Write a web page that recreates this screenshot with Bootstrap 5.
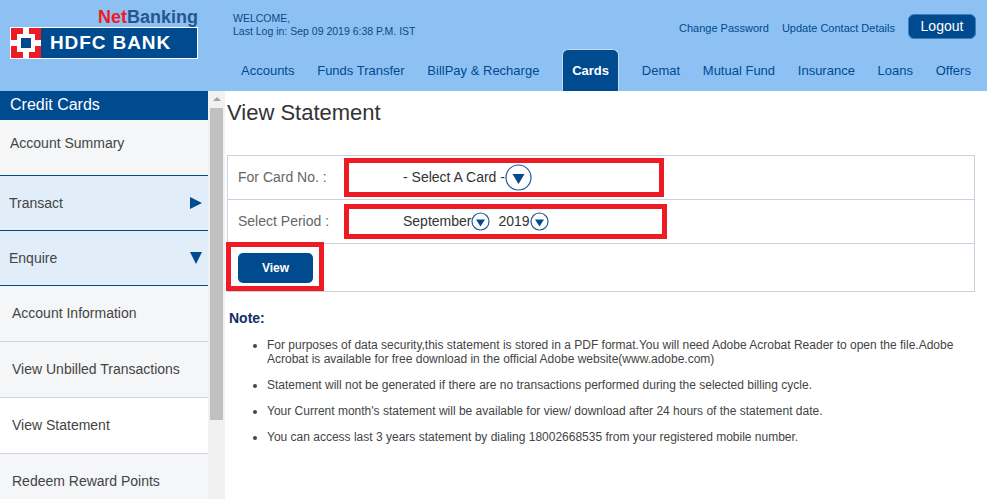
<!DOCTYPE html>
<html lang="en">
<head>
    <meta charset="UTF-8">
    <meta name="viewport" content="width=device-width, initial-scale=1.0">
    <title>HDFC NetBanking</title>
    <link href="https://cdn.jsdelivr.net/npm/bootstrap@5.3.3/dist/css/bootstrap.min.css" rel="stylesheet">
    <style>
        html, body { height: 100%; }
        body {
            font-family: "Liberation Sans", Arial, sans-serif;
            font-size: 12px;
            color: #333;
            overflow: hidden;
            background: #fff;
        }
        .top-bar { height: 91px; background: #8dc1f4; color: #004a8f; }
        .brand-box { width: 188px; margin-left: 10px; padding-top: 7px; }
        .net-word { font-size: 18px; font-weight: 700; line-height: 20px; text-align: right; color: #23578f; }
        .net-word span { color: #ed1c24; }
        .logo-strip { height: 32px; background: #004a8f; border: 1px solid #fff; }
        .logo-mark { width: 30px; height: 30px; display: block; flex: none; }
        .logo-word { font-size: 19px; font-weight: 700; color: #fff; letter-spacing: .9px; margin-left: 9px; line-height: 30px; white-space: nowrap; }
        .head-right { margin-left: 35px; width: 754px; }
        .welcome-row { height: 49px; }
        .welcome-text { font-size: 10.5px; line-height: 13px; padding-top: 12px; color: #0b4a85; }
        .top-link { font-size: 11px; color: #004a8f; text-decoration: none; margin-top: 20px; margin-right: 13px; }
        .logout-btn { width: 68px; height: 25px; margin-top: 14px; margin-left: 0; margin-right: 11px; padding: 0; background: #004a8f; color: #fff; font-size: 14px; font-weight: 400; border: 1px solid #3f7cb8; border-radius: 6px; }
        .menu-row { height: 42px; }
        .menu-item { font-size: 13px; color: #004a8f; text-decoration: none; line-height: 44px; white-space: nowrap; }
        .menu-item.on { width: 57px; text-align: center; background: #004a8f; color: #fff; font-weight: 700; border: 1px solid #c5d9ee; border-bottom: 0; border-radius: 6px 6px 0 0; line-height: 42px; }
        .page-body { height: 408px; }
        .side-panel { width: 208px; flex: none; overflow: hidden; background: #f5f6f8; }
        .side-title { height: 29px; background: #004a8f; color: #fff; font-size: 16px; line-height: 27px; padding-left: 10px; }
        .side-item { height: 56px; display: flex; align-items: center; padding-left: 12px; font-size: 14px; color: #444; border-bottom: 1px solid #d0d3df; text-decoration: none; }
        .side-item.first { height: 56px; padding-left: 10px; padding-bottom: 8px; border-bottom-color: #004a8f; }
        .side-item.group { height: 55px; padding: 0 6px 0 9px; justify-content: space-between; background: #e1edf9; border-bottom-color: #004a8f; }
        .side-item.current { background: #fff; }
        .scroll-track { width: 17px; flex: none; background: #f1f1f1; position: relative; }
        .scroll-up { width: 0; height: 0; margin: 6px auto 0; border-left: 4px solid transparent; border-right: 4px solid transparent; border-bottom: 4px solid #a3a3a3; }
        .scroll-thumb { width: 13px; height: 312px; margin: 7px 0 0 2px; background: #c1c1c1; }
        .main-area { flex: 1; padding: 0 12px 0 2px; min-width: 0; }
        .page-title { font-size: 22px; font-weight: 400; color: #333; line-height: 26px; margin: 9px 0 29px; }
        .form-box { border: 1px solid #ccd0de; border-bottom: 0; }
        .form-line { border-bottom: 1px solid #ccd0de; height: 44px; position: relative; display: flex; align-items: center; padding-left: 10px; font-size: 14px; }
        .form-line.btn-line { height: 48px; }
        .field-label { width: 165px; flex: none; color: #666; font-size: 14px; }
        .field-value { color: #333; font-size: 14px; display: flex; align-items: center; }
        .red-mark { position: absolute; border: 5px solid #ed1c24; pointer-events: none; }
        .mark-card { left: 116px; top: 2px; width: 320px; height: 39px; }
        .mark-period { left: 116px; top: 4px; width: 323px; height: 35px; }
        .mark-view { left: -2px; top: -2px; width: 98px; height: 49px; }
        .view-btn { width: 75px; height: 30px; padding: 0; background: #004a8f; color: #fff; font-size: 12px; font-weight: 700; border: 0; border-radius: 5px; }
        .note-head { font-size: 14px; font-weight: 700; color: #0f2f66; margin: 18px 0 11px 2px; line-height: 17px; }
        .note-list { margin: 0; padding-left: 40px; font-size: 12px; line-height: 14px; color: #444; }
        .note-list li { margin-bottom: 12px; }
    </style>
</head>

<body>
    <div class="top-bar d-flex">
        <div class="brand-box">
            <div class="net-word"><span>Net</span>Banking</div>
            <div class="logo-strip d-flex align-items-center">
                <svg class="logo-mark" viewBox="0 0 30 30">
                    <rect width="30" height="30" fill="#ed1c24"/>
                    <path d="M12 0h6v8h-6zM12 22h6v8h-6zM0 12h8v6H0zM22 12h8v6h-8z" fill="#fff"/>
                    <rect x="6" y="6" width="18" height="18" fill="#fff"/>
                    <rect x="10" y="10" width="10" height="10" fill="#004a8f"/>
                </svg>
                <span class="logo-word">HDFC BANK</span>
            </div>
        </div>
        <div class="head-right">
            <div class="welcome-row d-flex justify-content-between">
                <div class="welcome-text"><b class="fw-normal">WELCOME,</b><br>Last Log in: Sep 09 2019 6:38 P.M. IST</div>
                <div class="d-flex align-items-start">
                    <a class="top-link" href="#">Change Password</a>
                    <a class="top-link" href="#">Update Contact Details</a>
                    <button class="btn logout-btn">Logout</button>
                </div>
            </div>
            <nav class="menu-row d-flex justify-content-between pe-3 ps-2">
                <a class="menu-item" href="#">Accounts</a>
                <a class="menu-item" href="#">Funds Transfer</a>
                <a class="menu-item" href="#">BillPay &amp; Recharge</a>
                <a class="menu-item on" href="#">Cards</a>
                <a class="menu-item" href="#">Demat</a>
                <a class="menu-item" href="#">Mutual Fund</a>
                <a class="menu-item" href="#">Insurance</a>
                <a class="menu-item" href="#">Loans</a>
                <a class="menu-item" href="#">Offers</a>
            </nav>
        </div>
    </div>

    <div class="page-body d-flex">
        <div class="side-panel">
            <div class="side-title">Credit Cards</div>
            <a class="side-item first" href="#">Account Summary</a>
            <a class="side-item group" href="#">Transact
                <svg width="12" height="12" viewBox="0 0 12 12"><path d="M0 0L12 6L0 12Z" fill="#004a8f"/></svg>
            </a>
            <a class="side-item group" href="#">Enquire
                <svg width="12" height="12" viewBox="0 0 12 12"><path d="M0 0H12L6 12Z" fill="#004a8f"/></svg>
            </a>
            <a class="side-item" href="#">Account Information</a>
            <a class="side-item" href="#">View Unbilled Transactions</a>
            <a class="side-item current" href="#">View Statement</a>
            <a class="side-item" href="#">Redeem Reward Points</a>
        </div>
        <div class="scroll-track">
            <div class="scroll-up"></div>
            <div class="scroll-thumb"></div>
        </div>
        <div class="main-area">
            <h1 class="page-title">View Statement</h1>
            <div class="form-box">
                <div class="form-line">
                    <div class="field-label">For Card No. :</div>
                    <div class="field-value">- Select A Card -
                        <svg class="ms-auto" style="margin-left:122px" width="27" height="27" viewBox="0 0 27 27"><circle cx="13.5" cy="13.5" r="12.5" fill="#fff" stroke="#1d5c9d" stroke-width="1.2"/><path d="M7.5 10h12l-6 10z" fill="#004a8f"/></svg>
                    </div>
                    <div class="red-mark mark-card"></div>
                </div>
                <div class="form-line">
                    <div class="field-label">Select Period :</div>
                    <div class="field-value">September
                        <svg class="ms-0" width="19" height="19" viewBox="0 0 19 19"><circle cx="9.5" cy="9.5" r="8.5" fill="#fff" stroke="#1d5c9d" stroke-width="1.2"/><path d="M5 7.5h9l-4.500 7z" fill="#004a8f"/></svg>
                        <span class="ms-2">2019</span>
                        <svg width="19" height="19" viewBox="0 0 19 19"><circle cx="9.500" cy="9.500" r="8.500" fill="#fff" stroke="#1d5c9d" stroke-width="1.2"/><path d="M5 7.500h9l-4.500 7z" fill="#004a8f"/></svg>
                    </div>
                    <div class="red-mark mark-period"></div>
                </div>
                <div class="form-line btn-line">
                    <button class="btn view-btn">View</button>
                    <div class="red-mark mark-view"></div>
                </div>
            </div>
            <div class="note-head">Note:</div>
            <ul class="note-list">
                <li>For purposes of data security,this statement is stored in a PDF format.You will need Adobe Acrobat Reader to open the file.Adobe Acrobat is available for free download in the official Adobe website(www.adobe.com)</li>
                <li>Statement will not be generated if there are no transactions performed during the selected billing cycle.</li>
                <li>Your Current month's statement will be available for view/ download after 24 hours of the statement date.</li>
                <li>You can access last 3 years statement by dialing 18002668535 from your registered mobile number.</li>
            </ul>
        </div>
    </div>

    <script src="https://cdn.jsdelivr.net/npm/bootstrap@5.3.3/dist/js/bootstrap.bundle.min.js"></script>
</body>

</html>
